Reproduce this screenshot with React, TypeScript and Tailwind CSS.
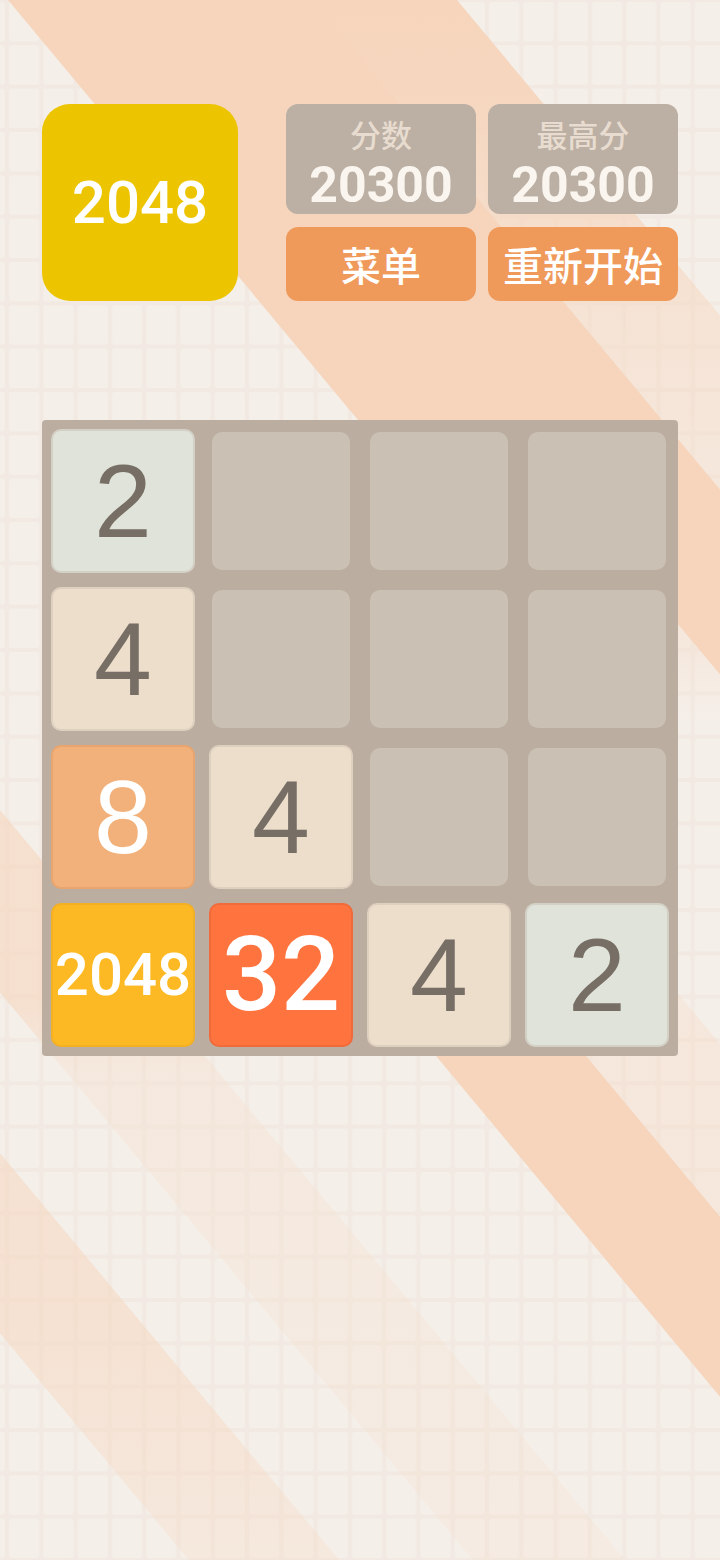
import React from 'react';

const board: number[][] = [
  [2, 0, 0, 0],
  [4, 0, 0, 0],
  [8, 4, 0, 0],
  [2048, 32, 4, 2],
];

// stripes in "c" space: x - y / 1.2 at the left and right edges
const stripes: { c0: number; c1: number; stops: [number, number][] }[] = [
  { c0: 8, c1: 160, stops: [[0, 1], [0.28, 1], [0.46, 0]] },
  { c0: 158, c1: 312, stops: [[0, 1], [1, 1]] },
  { c0: 310, c1: 457, stops: [[0, 1], [0.06, 0.95], [0.2, 0.45], [0.3, 0.3]] },
  { c0: -444, c1: -294, stops: [[0, 0], [0.45, 0], [0.66, 1], [1, 1]] },
  { c0: -296, c1: -150, stops: [[0, 0], [0.5, 0], [0.66, 0.3], [1, 0.25]] },
  { c0: -827, c1: -675, stops: [[0, 0.6], [0.64, 0.6], [0.69, 0.22], [1, 0.15]] },
  { c0: -1111, c1: -961, stops: [[0, 0.6], [0.85, 0.5], [1, 0.25]] },
];

function Background() {
  const w = 720 / 21;
  const h = 1560 / 36;
  return (
    <svg className="absolute inset-0" width="720" height="1560" viewBox="0 0 720 1560">
      <defs>
        <pattern id="grid" width={w} height={h} patternUnits="userSpaceOnUse" x="7" y="0">
          <rect width={w} height={h} fill="#f2eae2" />
          <rect x="2" y="2" width={w - 4} height={h - 4} rx="3" fill="#f5efe9" />
        </pattern>
        {stripes.map((s, i) => (
          <linearGradient key={i} id={`st${i}`} gradientUnits="userSpaceOnUse" x1="0" y1="0" x2="0" y2="1560">
            {s.stops.map(([o, a], j) => (
              <stop key={j} offset={o} stopColor="#f6d5bc" stopOpacity={a} />
            ))}
          </linearGradient>
        ))}
      </defs>
      <rect width="720" height="1560" fill="url(#grid)" />
      {stripes.map((s, i) => (
        <polygon
          key={i}
          points={`${s.c0},0 ${s.c1},0 ${s.c1 + 1300},1560 ${s.c0 + 1300},1560`}
          fill={`url(#st${i})`}
        />
      ))}
    </svg>
  );
}

function Tile({ value }: { value: number }) {
  if (value === 0) {
    return <div className="h-[138px] w-[138px] rounded-[10px] bg-[#cbc0b4]" />;
  }
  let cls = '';
  if (value === 2) cls = 'bg-[#e0e3d9] border-[#d3d0c6] text-[#776e65] text-[104px]';
  if (value === 4) cls = 'bg-[#ecdecb] border-[#ddd0bf] text-[#776e65] text-[104px]';
  if (value === 8) cls = 'bg-[#f2b17a] border-[#eaa56f] text-white text-[104px]';
  if (value === 32) cls = 'bg-[#ff733f] border-[#f06a3a] text-white text-[104px] font-medium font-[Roboto]';
  if (value === 2048) cls = 'bg-[#fdb923] border-[#f3b025] text-white text-[60px] font-medium font-[Roboto]';
  return (
    <div className="h-[138px] w-[138px]">
      <div
        className={`-m-[3px] flex h-[144px] w-[144px] items-center justify-center rounded-[10px] border-2 leading-none ${cls}`}
      >
        {value}
      </div>
    </div>
  );
}

export default function App() {
  const cjk = { fontFamily: '"Noto Sans CJK SC", "Noto Sans", sans-serif' };
  return (
    <div className="relative h-[1560px] w-[720px] overflow-hidden bg-[#f3ebe2]">
      <Background />
      <div className="relative flex flex-col px-[42px] pt-[104px]" style={{ fontFamily: '"Liberation Sans", Arial, sans-serif' }}>
        <div className="flex gap-[48px]">
          <div className="flex h-[197px] w-[196px] items-center justify-center rounded-[28px] bg-[#ecc400] font-[Roboto] text-[60px] font-medium text-white">
            2048
          </div>
          <div className="grid grid-cols-2 gap-x-[12px] gap-y-[13px]" style={cjk}>
            {['分数', '最高分'].map((label) => (
              <div key={label} className="flex h-[110px] w-[190px] flex-col items-center rounded-[12px] bg-[#bcafa3] pt-[13px]">
                <span className="text-[31px] leading-[34px] font-medium text-[#e7dccf]">{label}</span>
                <span className="mt-[9px] font-[Roboto] text-[50px] leading-[50px] font-bold text-[#faf6ef]">20300</span>
              </div>
            ))}
            {['菜单', '重新开始'].map((label) => (
              <div key={label} className="flex h-[74px] w-[190px] items-center justify-center rounded-[12px] bg-[#ef9a5b] text-[40px] font-medium text-white">
                {label}
              </div>
            ))}
          </div>
        </div>
        <div className="mt-[119px] grid w-[636px] grid-cols-4 gap-[20px] rounded-[4px] bg-[#bbada0] p-[12px]">
          {board.flat().map((v, i) => (
            <Tile key={i} value={v} />
          ))}
        </div>
      </div>
    </div>
  );
}
